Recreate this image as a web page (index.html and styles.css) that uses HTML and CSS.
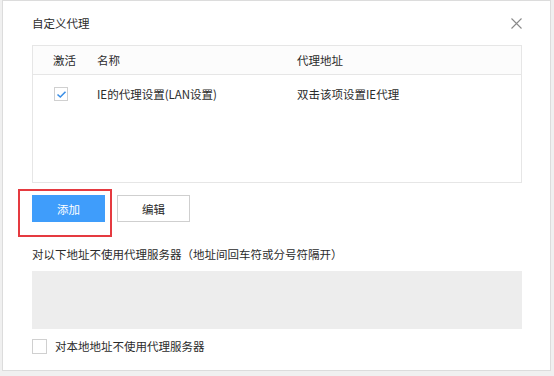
FILE: index.html
```html
<!DOCTYPE html>
<html lang="zh-CN">
<head>
    <meta charset="UTF-8">
    <meta name="viewport" content="width=device-width, initial-scale=1.0">
    <title>自定义代理</title>
    <link rel="stylesheet" href="styles.css">
</head>
<body>
    <div class="dialog">
        <div class="dialog-header">
            <span class="dialog-title">自定义代理</span>
            <span class="btn-close">
                <svg width="11" height="11" viewBox="0 0 11 11"><path d="M0.5 0.5L10.5 10.5M10.5 0.5L0.5 10.5" stroke="#8a8a8a" stroke-width="1.1" fill="none"/></svg>
            </span>
        </div>

        <div class="proxy-table">
            <div class="table-row table-head">
                <div class="col-active">激活</div>
                <div class="col-name">名称</div>
                <div class="col-addr">代理地址</div>
            </div>
            <div class="table-row">
                <div class="col-active">
                    <span class="check checked">
                        <svg width="11" height="9" viewBox="0 0 11 9"><path d="M1.5 4.5L4.3 7L9.5 1.8" stroke="#3a8ee6" stroke-width="1.6" fill="none"/></svg>
                    </span>
                </div>
                <div class="col-name">IE的代理设置(LAN设置)</div>
                <div class="col-addr">双击该项设置IE代理</div>
            </div>
        </div>

        <div class="button-group">
            <div class="highlight">
                <button class="btn-add">添加</button>
            </div>
            <button class="btn-edit">编辑</button>
        </div>

        <div class="bypass-label">对以下地址不使用代理服务器（地址间回车符或分号符隔开）</div>
        <div class="bypass-box"></div>

        <label class="local-option">
            <span class="check big"></span>
            <span>对本地地址不使用代理服务器</span>
        </label>
    </div>
</body>
</html>
```

FILE: styles.css
```css
body {
    margin: 0;
    background-color: #f0f0f0;
    font-family: "Noto Sans CJK SC", "Noto Sans", sans-serif;
    font-size: 11.5px;
    color: #2b2b2b;
}
.dialog {
    margin-left: 2px;
    width: 490px;
    height: 369px;
    padding: 0 28px 0 29px;
    background-color: #fff;
    border: 1px solid #dcdcdc;
}
.dialog-header {
    height: 44px;
    display: flex;
    align-items: center;
    justify-content: space-between;
}
.btn-close {
    display: flex;
}
.proxy-table {
    height: 136px;
    border: 1px solid #e6e6e6;
}
.table-row {
    display: flex;
    align-items: center;
    height: 38px;
}
.table-head {
    height: 28px;
    border-bottom: 1px solid #e6e6e6;
    background-color: #fcfcfc;
}
.col-active {
    width: 44px;
    padding-left: 20px;
    display: flex;
    align-items: center;
}
.col-name {
    width: 200px;
}
.col-addr {
    flex: 1;
}
.check {
    width: 14px;
    height: 14px;
    border: 1px solid #d0d0d0;
    background-color: #fff;
    display: flex;
    align-items: center;
    justify-content: center;
    box-sizing: border-box;
}
.check.checked {
    margin-left: 1px;
}
.check.big {
    width: 15px;
    height: 15px;
}
.button-group {
    display: flex;
    gap: 12px;
    margin-top: 12px;
}
.highlight {
    position: relative;
    display: flex;
}
.highlight::after {
    content: "";
    position: absolute;
    left: -14px;
    top: -6px;
    right: -7px;
    bottom: -15px;
    border: 2px solid #e53a40;
    pointer-events: none;
}
button {
    width: 73px;
    height: 27px;
    font-family: inherit;
    font-size: 11.5px;
    cursor: pointer;
}
.btn-add {
    background-color: #3f9dfb;
    color: #fff;
    border: none;
}
.btn-edit {
    background-color: #fff;
    color: #2b2b2b;
    border: 1px solid #cfcfcf;
}
.bypass-label {
    margin-top: 24px;
    line-height: 17px;
}
.bypass-box {
    margin-top: 8px;
    height: 58px;
    background-color: #ededed;
}
.local-option {
    margin-top: 9px;
    display: flex;
    align-items: center;
    gap: 8px;
}
```
